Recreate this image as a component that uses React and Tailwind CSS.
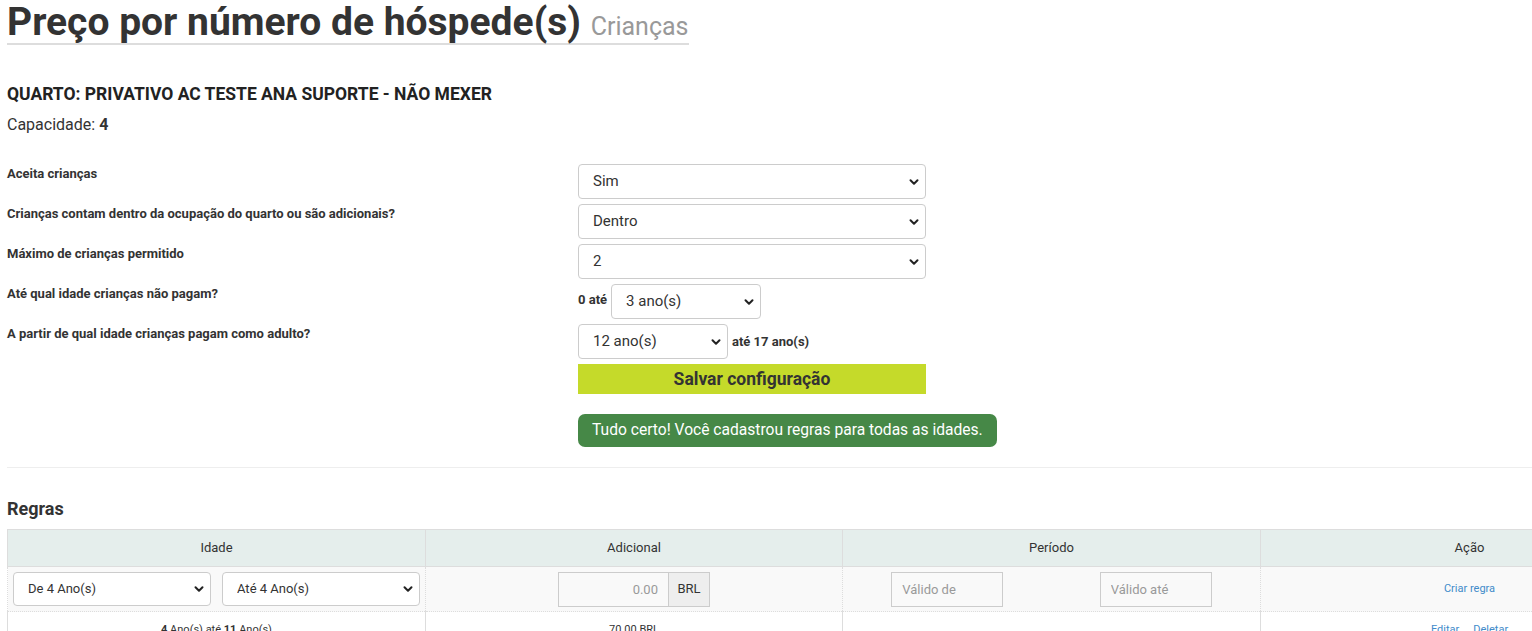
import React from "react";

const Chevron = () => (
  <svg className="pointer-events-none absolute right-[6px] top-1/2 -translate-y-1/2" width="12" height="12" viewBox="0 0 12 12">
    <path d="M2.5 4.2 L6 7.7 L9.5 4.2" fill="none" stroke="#222" strokeWidth="2" strokeLinecap="round" strokeLinejoin="round" />
  </svg>
);

const Select = ({ value, className = "", textClass = "text-[15px] pl-[14px]" }) => (
  <div className={"relative " + className}>
    <select
      defaultValue={value}
      className={"appearance-none w-full h-full bg-white border border-[#ccc] rounded-[4px] text-[#333] outline-none " + textClass}
    >
      <option>{value}</option>
    </select>
    <Chevron />
  </div>
);

const Label = ({ children }) => (
  <div className="w-[571px] shrink-0 text-[13px] font-bold text-[#333]">{children}</div>
);

export default function App() {
  return (
    <div className="w-screen overflow-x-hidden bg-white" style={{ fontFamily: "Roboto, 'Liberation Sans', sans-serif" }}>
      <div className="pl-[7px] pt-[2px] text-[#333]">
        <h1 className="w-fit border-b-2 border-[#ddd] text-[39px] leading-[41px] font-bold text-[#333]">
          Preço por número de hóspede(s) <span className="text-[25px] leading-none font-normal text-[#999]">Crianças</span>
        </h1>

        <h3 className="mt-[38px] text-[17.5px] leading-[22px] font-bold text-[#222]">QUARTO: PRIVATIVO AC TESTE ANA SUPORTE - NÃO MEXER</h3>
        <p className="mt-[10px] text-[16px] leading-[20px] text-[#333]">
          Capacidade: <b>4</b>
        </p>

        <div className="mt-[29px] flex flex-col gap-[5px]">
          <div className="flex">
            <Label>Aceita crianças</Label>
            <Select value="Sim" className="w-[348px] h-[35px]" />
          </div>
          <div className="flex">
            <Label>Crianças contam dentro da ocupação do quarto ou são adicionais?</Label>
            <Select value="Dentro" className="w-[348px] h-[35px]" />
          </div>
          <div className="flex">
            <Label>Máximo de crianças permitido</Label>
            <Select value="2" className="w-[348px] h-[35px]" />
          </div>
          <div className="flex">
            <Label>Até qual idade crianças não pagam?</Label>
            <div className="flex items-start gap-[4px]">
              <span className="pt-[6px] text-[13px] font-bold text-[#333]">0 até</span>
              <Select value="3 ano(s)" className="w-[150px] h-[35px]" />
            </div>
          </div>
          <div className="flex">
            <Label>A partir de qual idade crianças pagam como adulto?</Label>
            <div className="flex items-center gap-[4px]">
              <Select value="12 ano(s)" className="w-[150px] h-[35px]" />
              <span className="text-[13px] font-bold text-[#333]">até 17 ano(s)</span>
            </div>
          </div>
          <div className="flex">
            <div className="w-[571px] shrink-0" />
            <div className="flex flex-col items-start">
              <button className="w-[348px] h-[30px] bg-[#c5da2a] text-[17.5px] font-bold text-[#333]">Salvar configuração</button>
              <div className="mt-[20px] h-[33px] px-[14px] flex items-center rounded-[7px] bg-[#468847] text-white text-[15.6px]">
                Tudo certo! Você cadastrou regras para todas as idades.
              </div>
            </div>
          </div>
        </div>

        <hr className="mt-[20px] border-t border-[#eee]" />

        <h3 className="mt-[30px] text-[18px] leading-[22px] font-bold text-[#333]">Regras</h3>

        <table className="mt-[9px] table-fixed w-[1671px] border-collapse text-[13px] text-[#333]">
          <colgroup>
            <col className="w-[418px]" />
            <col className="w-[417px]" />
            <col className="w-[418px]" />
            <col className="w-[418px]" />
          </colgroup>
          <thead>
            <tr className="bg-[#e5eeec] h-[37px]">
              <th className="font-normal border border-[#ddd]">Idade</th>
              <th className="font-normal border border-[#ddd]">Adicional</th>
              <th className="font-normal border border-[#ddd]">Período</th>
              <th className="font-normal border border-[#ddd]">Ação</th>
            </tr>
          </thead>
          <tbody>
            <tr className="bg-[#f9f9f9] h-[45px]">
              <td className="border-x border-[#ddd] border-t border-t-[#ddd] border-b border-b-[#ddd] border-dotted px-[5px]">
                <div className="flex gap-[11px]">
                  <Select value="De 4 Ano(s)" className="w-[198px] h-[34px]" textClass="text-[13px] pl-[14px]" />
                  <Select value="Até 4 Ano(s)" className="w-[198px] h-[34px]" textClass="text-[13px] pl-[14px]" />
                </div>
              </td>
              <td className="border-x border-[#ddd] border-b border-b-[#ddd] border-dotted">
                <div className="flex justify-center">
                  <div className="flex h-[35px]">
                    <input
                      placeholder="0.00"
                      className="w-[111px] h-full border border-[#ccc] bg-[#f9f9f9] text-right pr-[10px] text-[13px] placeholder:text-[#999] outline-none"
                    />
                    <span className="w-[41px] h-full flex items-center justify-center border border-l-0 border-[#ccc] bg-[#eee] text-[13px]">BRL</span>
                  </div>
                </div>
              </td>
              <td className="border-x border-[#ddd] border-b border-b-[#ddd] border-dotted">
                <div className="flex justify-around">
                  <input
                    placeholder="Válido de"
                    className="w-[112px] h-[35px] border border-[#ccc] bg-[#f9f9f9] pl-[10px] text-[13px] placeholder:text-[#999] outline-none"
                  />
                  <input
                    placeholder="Válido até"
                    className="w-[112px] h-[35px] border border-[#ccc] bg-[#f9f9f9] pl-[10px] text-[13px] placeholder:text-[#999] outline-none"
                  />
                </div>
              </td>
              <td className="border-x border-[#ddd] border-b border-b-[#ddd] border-dotted text-center text-[11px]">
                <a className="text-[#428bca]">Criar regra</a>
              </td>
            </tr>
            <tr className="h-[45px]">
              <td className="border-x border-[#ddd] text-center align-top pt-[10px] text-[11px] leading-[16px]">
                <b>4</b> Ano(s) até <b>11</b> Ano(s)
              </td>
              <td className="border-x border-[#ddd] text-center align-top pt-[10px] text-[11px] leading-[16px]">70.00 BRL</td>
              <td className="border-x border-[#ddd]"></td>
              <td className="border-x border-[#ddd] text-center align-top pt-[10px] text-[11px] leading-[16px] text-[#428bca]">
                <a className="mr-[14px]">Editar</a>
                <a>Deletar</a>
              </td>
            </tr>
          </tbody>
        </table>
      </div>
    </div>
  );
}
